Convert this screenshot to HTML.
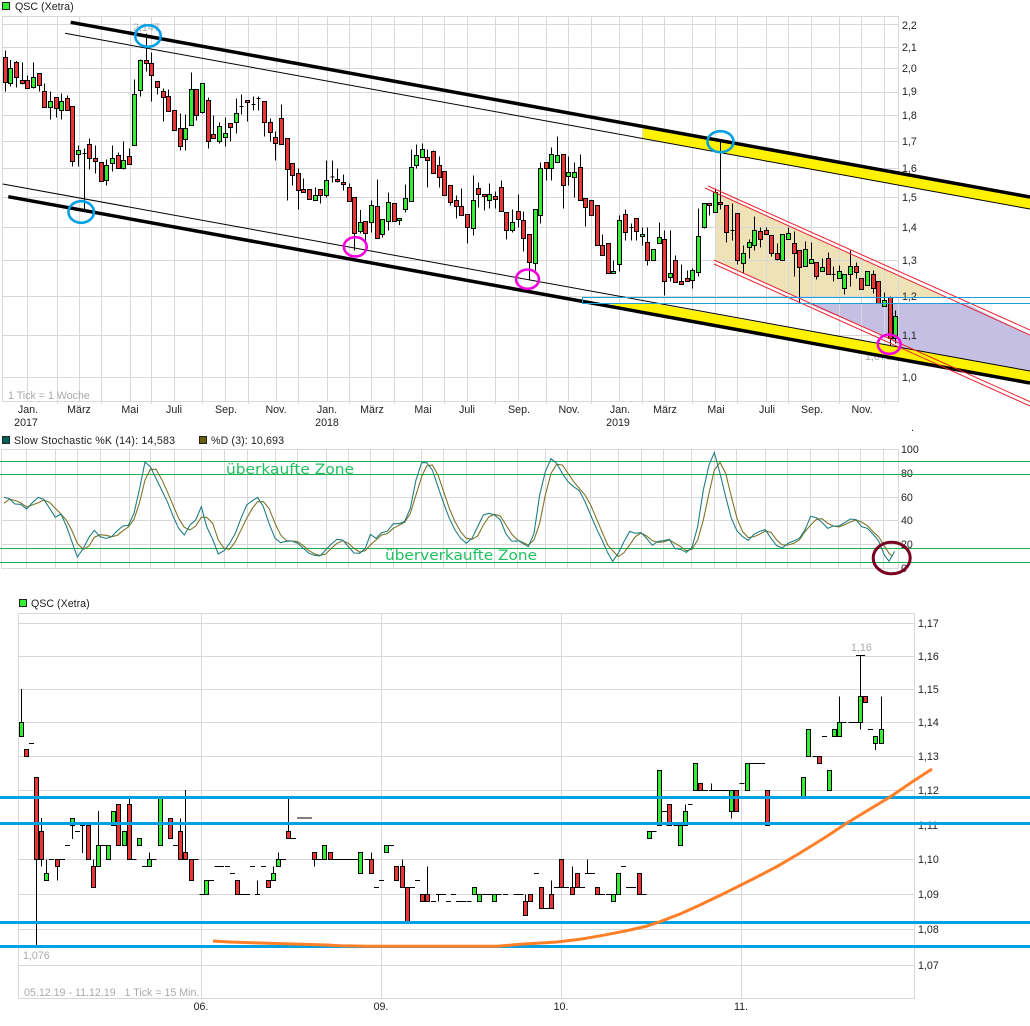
<!DOCTYPE html>
<html lang="de"><head><meta charset="utf-8"><title>QSC (Xetra)</title>
<style>
html,body{margin:0;padding:0;background:#fff;width:1030px;height:1026px;overflow:hidden}
svg{display:block;position:absolute;left:0;top:0}
text{font-family:"Liberation Sans",sans-serif;font-size:10.67px;fill:#222}
.g{fill:#aaa}
.grid{stroke:#d8d8d8;stroke-width:1;fill:none;shape-rendering:crispEdges}
.w{stroke:#000;stroke-width:3;fill:none;shape-rendering:crispEdges}
.r{fill:#ee3333;stroke:#000;stroke-width:3;shape-rendering:crispEdges}
.u{fill:#33ee33;stroke:#000;stroke-width:3;shape-rendering:crispEdges}
.gl{stroke:#1fb14d;stroke-width:1;shape-rendering:crispEdges}
.rl{stroke:#ea2230;stroke-width:1;fill:none}
</style></head><body>
<svg width="1030" height="1026" viewBox="0 0 1030 1026" xmlns="http://www.w3.org/2000/svg">
<!-- legend 1 -->
<rect x="2.5" y="2.5" width="7" height="7" fill="#33ee33" stroke="#222"/>
<text x="15" y="10">QSC (Xetra)</text>
<!-- chart 1 fills -->
<polygon points="715,193 945,297 797,297 715,260" fill="#eee2b6"/>
<polygon points="808,304 967,304 1030,335 1030,371 900,347 887,337" fill="#c6bfe4"/>
<!-- chart 1 grid -->
<path class="grid" d="M2.5 16.5H898.5M2.5 24.5H898.5M2.5 47.5H898.5M2.5 68.5H898.5M2.5 92.5H898.5M2.5 115.5H898.5M2.5 141.5H898.5M2.5 168.5H898.5M2.5 197.5H898.5M2.5 227.5H898.5M2.5 260.5H898.5M2.5 296.5H898.5M2.5 335.5H898.5M2.5 377.5H898.5M2.5 401.5H898.5M2.5 16V402M27.5 16V402M57.5 16V404M79.5 16V402M101.5 16V404M130.5 16V402M151.5 16V404M174.5 16V402M202.5 16V404M225.5 16V402M248.5 16V404M276.5 16V402M298.5 16V404M327.5 16V402M349.5 16V404M371.5 16V402M394.5 16V404M422.5 16V402M444.5 16V404M467.5 16V402M495.5 16V404M518.5 16V402M546.5 16V404M568.5 16V402M591.5 16V404M619.5 16V402M642.5 16V404M664.5 16V402M692.5 16V404M715.5 16V402M737.5 16V404M766.5 16V402M788.5 16V404M811.5 16V402M839.5 16V404M861.5 16V402M884.5 16V404M898.5 16V402"/>
<!-- chart 1 labels -->
<g>
<text x="902" y="29">2,2</text><text x="902" y="51">2,1</text><text x="902" y="72">2,0</text><text x="902" y="95">1,9</text><text x="902" y="119">1,8</text><text x="902" y="145">1,7</text><text x="902" y="172">1,6</text><text x="902" y="201">1,5</text><text x="902" y="231">1,4</text><text x="902" y="264">1,3</text><text x="902" y="300">1,2</text><text x="902" y="339">1,1</text><text x="902" y="381">1,0</text>
<text x="911" y="431">.</text>
</g>
<g text-anchor="middle">
<text x="28" y="413">Jan.</text><text x="26" y="426">2017</text><text x="79" y="413">März</text><text x="130" y="413">Mai</text><text x="174" y="413">Juli</text><text x="226" y="413">Sep.</text><text x="276" y="413">Nov.</text><text x="327" y="413">Jan.</text><text x="327" y="426">2018</text><text x="372" y="413">März</text><text x="423" y="413">Mai</text><text x="467" y="413">Juli</text><text x="519" y="413">Sep.</text><text x="569" y="413">Nov.</text><text x="620" y="413">Jan.</text><text x="618" y="426">2019</text><text x="665" y="413">März</text><text x="716" y="413">Mai</text><text x="767" y="413">Juli</text><text x="812" y="413">Sep.</text><text x="862" y="413">Nov.</text>
</g>
<text class="g" x="8" y="399">1 Tick = 1 Woche</text>
<text class="g" x="133" y="31">2,147</text>
<text class="g" x="865" y="360">1,076</text>
<!-- yellow -->
<polygon points="643,126 1030,197 1030,209 643,138" fill="#fff200"/>
<polygon points="612,304 657,304 1030,371 1030,383 680,320 612,308" fill="#fff200"/>
<!-- chart 1 candles -->
<g transform="scale(.33333)">
<path class="w" d="M16 152V275M31 180V260M49 183V262M67 187V254M82 227V265M100 187V265M118 220V274M133 250V322M151 274V358M169 292V352M184 280V358M202 286V331M217 319V500M235 436V500M253 445V630M268 415V508M286 436V520M304 487V544M319 478V556M337 436V514M355 457V505M370 424V508M388 445V493M403 238V436M421 178V290M439 100V214M454 157V305M472 244V283M490 265V364M505 268V334M523 331V391M541 340V451M556 343V451M574 217V376M589 268V362M607 250V340M625 292V445M640 346V415M658 367V430M676 352V439M691 370V424M709 295V400M724 283V343M742 301V364M760 289V331M775 289V331M793 304V410M811 355V424M826 394V481M844 313V433M862 415V601M877 490V556M895 505V628M910 535V577M928 568V598M946 562V601M961 568V610M979 481V592M997 481V547M1012 505V547M247 461h12M718 319h12M754 313h12M769 295h12M991 531h12"/>
<path class="r" d="M10 172h12v75h-12zM43 187h12v45h-12zM61 241h12v9h-12zM76 241h12v24h-12zM112 220h12v36h-12zM127 274h12v48h-12zM163 292h12v34h-12zM196 295h12v36h-12zM211 319h12v165h-12zM262 433h12v42h-12zM280 475h12v9h-12zM298 487h12v57h-12zM349 466h12v39h-12zM382 469h12v24h-12zM433 181h12v9h-12zM448 190h12v36h-12zM466 244h12v18h-12zM484 274h12v18h-12zM499 289h12v45h-12zM517 331h12v60h-12zM535 385h12v54h-12zM583 268h12v78h-12zM619 301h12v123h-12zM634 403h12v12h-12zM685 370h12v12h-12zM736 301h12v6h-12zM787 304h12v63h-12zM805 367h12v30h-12zM820 412h12v18h-12zM838 355h12v78h-12zM856 415h12v93h-12zM871 490h12v36h-12zM889 520h12v51h-12zM904 568h12v9h-12zM922 568h12v30h-12zM955 568h12v18h-12zM1006 538h12v6h-12z"/>
<path class="u" d="M25 205h12v45h-12zM94 232h12v30h-12zM145 304h12v18h-12zM178 304h12v27h-12zM229 451h12v12h-12zM313 496h12v45h-12zM331 475h12v15h-12zM364 481h12v24h-12zM397 283h12v153h-12zM415 181h12v90h-12zM550 385h12v33h-12zM568 268h12v108h-12zM601 250h12v87h-12zM652 379h12v45h-12zM670 400h12v12h-12zM703 340h12v27h-12zM940 586h12v15h-12zM973 541h12v45h-12z"/>
</g>
<g transform="translate(340,120) scale(.33333)">
<path class="w" d="M10 163V212M28 190V244M43 232V391M61 270V340M76 304V370M94 241V337M112 178V355M127 298V352M145 217V331M163 250V304M178 295V315M196 193V277M214 88V244M229 73V145M247 70V112M262 88V202M280 91V160M298 109V202M313 154V226M331 196V256M349 226V295M364 205V286M382 283V370M400 166V346M415 187V262M433 223V271M448 190V265M466 214V265M484 181V274M499 277V358M517 268V337M535 223V322M550 274V394M568 343V481M586 268V451M601 127V310M619 127V181M634 82V181M652 49V127M670 103V265M685 109V196M703 127V232M721 103V241M736 235V319M754 241V286M772 256V376M787 343V406M805 370V460M820 421V460M838 286V454M856 268V361M874 310V361M889 295V361M907 322V376M922 322V436M940 388V421M958 307V370M973 331V526M991 331V484M1006 406V487M868 322h12"/>
<path class="r" d="M4 187h12v6h-12zM22 202h12v42h-12zM37 232h12v108h-12zM70 304h12v36h-12zM106 259h12v96h-12zM157 250h12v54h-12zM256 112h12v9h-12zM274 94h12v66h-12zM292 136h12v36h-12zM307 154h12v72h-12zM325 196h12v51h-12zM343 241h12v18h-12zM358 259h12v27h-12zM376 283h12v39h-12zM409 205h12v18h-12zM427 223h12v6h-12zM460 229h12v9h-12zM478 202h12v72h-12zM493 277h12v54h-12zM529 274h12v24h-12zM544 301h12v54h-12zM562 343h12v84h-12zM613 127h12v18h-12zM664 103h12v93h-12zM715 142h12v99h-12zM730 235h12v27h-12zM748 241h12v45h-12zM766 256h12v120h-12zM781 376h12v30h-12zM799 370h12v90h-12zM850 283h12v54h-12zM883 295h12v39h-12zM916 367h12v54h-12zM967 358h12v126h-12zM1000 421h12v66h-12z"/>
<path class="u" d="M55 307h12v27h-12zM88 256h12v51h-12zM121 298h12v45h-12zM139 247h12v57h-12zM172 295h12v6h-12zM190 235h12v33h-12zM208 142h12v102h-12zM223 106h12v30h-12zM241 88h12v24h-12zM394 241h12v84h-12zM442 223h12v18h-12zM511 307h12v24h-12zM580 268h12v162h-12zM595 145h12v141h-12zM628 103h12v42h-12zM646 106h12v21h-12zM679 157h12v12h-12zM697 157h12v15h-12zM814 454h12v6h-12zM832 301h12v132h-12zM901 343h12v6h-12zM934 388h12v33h-12zM952 352h12v18h-12zM985 460h12v12h-12z"/>
</g>
<g transform="translate(680,120) scale(.33333)">
<path class="w" d="M4 433V493M22 451V484M37 445V505M55 265V469M73 250V325M88 250V286M106 205V277M121 60V268M139 256V367M157 250V361M172 280V433M190 376V460M208 358V415M223 289V391M241 322V382M259 322V343M274 346V409M292 370V421M307 343V421M325 322V358M343 334V469M358 391V550M376 364V439M394 367V430M409 427V478M427 415V454M445 397V463M460 440V484M478 436V475M493 463V523M511 391V499M529 427V475M544 475V508M562 454V496M580 451V520M595 484V550M613 517V559M631 530V680M646 571V670M151 331h12M454 463h12"/>
<path class="r" d="M-2 484h12v9h-12zM16 475h12v9h-12zM82 250h12v6h-12zM115 247h12v6h-12zM133 256h12v81h-12zM166 280h12v141h-12zM235 334h12v24h-12zM253 331h12v12h-12zM268 346h12v54h-12zM286 400h12v18h-12zM337 370h12v30h-12zM352 391h12v51h-12zM403 427h12v42h-12zM439 415h12v48h-12zM523 439h12v18h-12zM538 475h12v33h-12zM574 463h12v42h-12zM589 484h12v66h-12zM625 533h12v122h-12z"/>
<path class="u" d="M31 451h12v30h-12zM49 349h12v108h-12zM67 250h12v72h-12zM100 217h12v60h-12zM184 400h12v30h-12zM202 367h12v15h-12zM217 331h12v45h-12zM301 343h12v78h-12zM319 340h12v18h-12zM370 388h12v51h-12zM388 418h12v12h-12zM421 442h12v12h-12zM472 454h12v21h-12zM487 463h12v42h-12zM505 439h12v24h-12zM556 454h12v42h-12zM607 541h12v18h-12zM640 589h12v66h-12z"/>
</g>
<!-- trend lines -->
<g fill="none" stroke="#000">
<path stroke-width="3.5" d="M70.7 22.3L1030 197"/>
<path stroke-width="3.5" d="M8.3 196.7L1030 383"/>
<path stroke-width="1" d="M65 33.3L1030 209"/>
<path stroke-width="1" d="M2.7 184L1030 371"/>
</g>
<path class="rl" d="M708 186L1030 330M705 188L1030 335M714 260L1030 401.7M714 264L1030 406"/>
<rect x="582.5" y="297.5" width="460" height="6" fill="none" stroke="#1c9fd8" stroke-width="1"/>
<g fill="none" stroke="#00a0e3" stroke-width="2.6">
<ellipse cx="148" cy="36" rx="12.7" ry="10.8"/>
<ellipse cx="81.2" cy="212" rx="12.7" ry="10.8"/>
<ellipse cx="720.5" cy="141.7" rx="13" ry="10.5"/>
</g>
<g fill="none" stroke="#f400e0" stroke-width="2.6">
<ellipse cx="355.3" cy="246.8" rx="11.4" ry="9.6"/>
<ellipse cx="527.5" cy="279.2" rx="11.4" ry="9.6"/>
<ellipse cx="889.2" cy="344.2" rx="11.4" ry="9.6"/>
</g>
<!-- stochastic -->
<rect x="2.5" y="436.5" width="7" height="7" fill="#006060" stroke="#222"/>
<text x="14" y="444" textLength="161">Slow Stochastic %K (14): 14,583</text>
<rect x="199.5" y="436.5" width="7" height="7" fill="#666000" stroke="#222"/>
<text x="211" y="444" textLength="73">%D (3): 10,693</text>
<path class="grid" d="M1.5 449.5H898.5M1.5 474.5H898.5M1.5 497.5H898.5M1.5 520.5H898.5M1.5 544.5H898.5M1.5 568.5H898.5M1.5 449V569M26.5 449V569M55.5 449V569M77.5 449V569M100.5 449V569M129.5 449V569M150.5 449V569M174.5 449V569M201.5 449V569M224.5 449V569M247.5 449V569M275.5 449V569M297.5 449V569M326.5 449V569M348.5 449V569M370.5 449V569M393.5 449V569M421.5 449V569M443.5 449V569M466.5 449V569M494.5 449V569M517.5 449V569M545.5 449V569M567.5 449V569M590.5 449V569M618.5 449V569M641.5 449V569M663.5 449V569M691.5 449V569M714.5 449V569M736.5 449V569M765.5 449V569M787.5 449V569M810.5 449V569M838.5 449V569M860.5 449V569M883.5 449V569M898.5 449V569"/>
<text x="901" y="453">100</text><text x="901" y="477">80</text><text x="901" y="501">60</text><text x="901" y="524">40</text><text x="901" y="548">20</text><text x="901" y="572">0</text>
<path class="gl" d="M0 461.5H1030M0 474.5H1030M0 548.5H1030M0 562.5H1030"/>
<text x="226" y="474" textLength="128" lengthAdjust="spacingAndGlyphs" style="font-family:'DejaVu Sans',sans-serif;font-size:14.5px;fill:#1fc060">überkaufte Zone</text>
<text x="385" y="560" textLength="152" lengthAdjust="spacingAndGlyphs" style="font-family:'DejaVu Sans',sans-serif;font-size:14.5px;fill:#1fc060">überverkaufte Zone</text>
<g transform="translate(0,380) scale(.33333)" fill="none" stroke-width="3.2">
<polyline stroke="#7c7222" points="12,370 28,358 45,361 62,368 80,381 97,375 115,368 131,360 149,367 166,385 183,402 200,422 215,450 232,490 250,508 267,498 283,472 300,464 318,466 335,470 352,466 369,452 385,441 402,418 418,370 435,300 451,268 468,268 485,298 502,335 519,375 536,415 553,442 570,450 587,438 604,412 620,412 638,430 655,480 672,505 689,508 706,485 723,450 740,415 757,385 773,365 790,365 807,385 825,430 842,465 859,482 876,483 893,485 910,497 927,512 944,522 960,526 977,522 994,505 1011,490 1028,482 1045,490 1062,505 1079,516 1096,512 1111,495 1128,480 1145,465 1162,461 1180,445 1197,436 1214,427 1231,400 1248,345 1265,290 1280,258 1297,255 1314,285 1331,335 1348,385 1365,425 1382,455 1399,475 1416,478 1433,468 1450,435 1467,410 1484,403 1501,408 1518,435 1535,462 1552,480"/>
<polyline stroke="#1b7c7f" points="12,352 28,356 45,372 62,373 80,387 97,368 115,352 131,358 149,385 166,412 183,402 200,440 232,531 250,505 267,472 283,451 300,470 318,475 335,470 352,452 369,438 385,436 402,400 418,330 435,246 451,260 468,295 485,330 502,365 519,408 536,445 553,465 570,435 587,420 604,380 620,440 638,478 655,522 672,512 689,490 706,460 723,415 740,375 757,362 773,352 790,380 807,430 825,475 842,488 859,484 876,483 893,490 910,505 927,520 944,526 960,528 977,510 994,492 1011,478 1028,480 1045,500 1062,519 1079,520 1096,505 1111,463 1128,475 1145,458 1162,454 1180,431 1197,431 1214,424 1231,385 1248,300 1265,248 1280,248 1297,270 1314,320 1331,370 1348,415 1365,450 1382,475 1399,490 1416,475 1433,440 1450,405 1467,400 1484,405 1501,420 1518,462 1535,483 1552,484"/>
</g>
<g transform="translate(520,430) scale(.33333)" fill="none" stroke-width="3.2">
<polyline stroke="#7c7222" points="-8,330 8,337 25,345 42,330 59,280 76,195 93,130 110,103 127,105 144,130 161,155 178,175 195,195 212,225 229,265 246,305 263,345 278,362 295,380 312,368 329,345 346,320 363,309 380,318 397,332 414,337 431,336 448,330 465,340 482,350 499,362 516,358 533,330 550,270 567,190 583,120 600,97 617,130 634,200 651,265 668,305 685,323 702,320 719,313 736,303 753,307 770,330 787,345 804,345 821,340 838,330 855,305 872,285 889,268 906,266 923,280 940,288 957,291 974,284 991,276 1008,270 1025,276 1042,287 1059,305 1076,320 1093,348 1107,370 1117,378"/>
<polyline stroke="#1b7c7f" points="-8,330 8,340 25,350 42,310 59,195 76,125 93,86 110,100 127,130 144,155 161,170 178,182 195,215 212,255 229,295 246,330 263,368 278,394 295,370 312,335 329,304 346,310 363,308 380,325 397,346 414,334 431,332 448,328 465,356 482,358 499,367 516,352 533,290 550,180 567,105 583,68 600,130 617,200 634,265 651,303 668,320 685,331 702,313 719,304 736,299 753,325 770,347 787,354 804,340 821,333 838,325 855,300 872,259 889,263 906,277 923,295 940,288 957,288 974,278 991,267 1008,269 1025,290 1042,295 1059,312 1076,333 1093,375 1107,394 1124,364"/>
</g>
<ellipse cx="891.7" cy="558" rx="18.5" ry="15.8" fill="none" stroke="#7a0020" stroke-width="3"/>
<!-- chart 2 -->
<rect x="19.5" y="599.5" width="7" height="7" fill="#33ee33" stroke="#222"/>
<text x="31" y="607">QSC (Xetra)</text>
<path class="grid" d="M18.5 613.5H914.5M18.5 623.5H914.5M18.5 656.5H914.5M18.5 689.5H914.5M18.5 722.5H914.5M18.5 756.5H914.5M18.5 790.5H914.5M18.5 823.5H914.5M18.5 859.5H914.5M18.5 894.5H914.5M18.5 929.5H914.5M18.5 965.5H914.5M18.5 998.5H914.5M18.5 613V999M201.5 613V999M381.5 613V999M561.5 613V999M741.5 613V999M914.5 613V999"/>
<text x="918" y="627">1,17</text><text x="918" y="660">1,16</text><text x="918" y="693">1,15</text><text x="918" y="726">1,14</text><text x="918" y="760">1,13</text><text x="918" y="794">1,12</text><text x="918" y="829">1,11</text><text x="918" y="863">1,10</text><text x="918" y="898">1,09</text><text x="918" y="933">1,08</text><text x="918" y="969">1,07</text>
<g text-anchor="middle"><text x="201" y="1010">06.</text><text x="381" y="1010">09.</text><text x="561" y="1010">10.</text><text x="741" y="1010">11.</text></g>
<text class="g" x="851" y="651">1,16</text>
<text class="g" x="23" y="959">1,076</text>
<text class="g" x="24" y="996" xml:space="preserve">05.12.19 - 11.12.19   1 Tick = 15 Min.</text>
<g transform="translate(0,680) scale(.33333)">
<path class="w" d="M64 27V127M87 190h15M109 292V795M124 414V560M139 538V580M147 538h15M172 559V601M179 538h16M195 496h15M217 436V477M225 454h15M247 436V519M240 436h15M280 538V559M295 393V496M295 496h25M388 355V373M382 538h28M426 559h15M448 517V538M441 538h29M519 496h15M541 415V454M556 330V517M568 538h28M598 643h15M625 601h17M643 559h29M675 559h15M690 580h15M712 643h38M750 559h15M772 601V643M765 643h15M783 559h15M820 559V580M835 517V538M835 538h23M865 355V454M865 475h23M891 414h45M943 538V560M943 538h24M991 538h29"/>
<path class="r" d="M73 208h12v21h-12zM103 292h12v246h-12zM118 454h12v84h-12zM166 538h12v21h-12zM259 436h12v102h-12zM274 559h12v63h-12zM349 373h12v123h-12zM382 373h12v165h-12zM505 415h12v60h-12zM535 454h12v84h-12zM550 517h12v21h-12zM568 538h12v63h-12zM706 601h12v42h-12zM799 601h12v21h-12zM859 454h12v21h-12zM937 517h12v21h-12zM985 517h12v21h-12z"/>
<path class="u" d="M58 127h12v42h-12zM133 580h12v21h-12zM211 415h12v21h-12zM289 496h12v63h-12zM319 496h12v42h-12zM334 394h12v42h-12zM367 454h12v42h-12zM412 475h12v21h-12zM442 538h12v21h-12zM475 352h12v144h-12zM613 601h12v42h-12zM814 580h12v21h-12zM829 538h12v21h-12zM967 496h12v42h-12z"/>
</g>
<g transform="translate(340,750) scale(.33333)">
<path class="w" d="M0 328h55M73 328h15M94 307V328M102 412h15M117 391h15M139 286h23M187 328V349M202 412h23M225 391h15M262 349V433M273 454h15M295 433V454M288 433h30M318 454h15M333 433h15M348 454h30M380 454h15M403 433h82M489 433h15M520 433h30M556 433V454M582 370h15M604 475h36M634 391V433M642 412h45M697 349V412M712 412h23M742 328V370M735 370h30M772 433h23M798 433h15M843 349h15M858 412h30M898 433h22"/>
<path class="r" d="M88 328h12v42h-12zM163 349h12v42h-12zM181 349h12v63h-12zM196 412h12v105h-12zM241 433h12v21h-12zM256 433h12v21h-12zM550 454h12v42h-12zM565 433h12v21h-12zM598 412h12v63h-12zM628 433h12v42h-12zM658 328h12v84h-12zM691 412h12v21h-12zM706 370h12v42h-12zM766 412h12v21h-12zM892 370h12v63h-12z"/>
<path class="u" d="M55 307h12v63h-12zM133 286h12v21h-12zM397 412h12v21h-12zM412 433h12v21h-12zM457 433h12v21h-12zM814 433h12v21h-12zM829 370h12v63h-12z"/>
</g>
<g transform="translate(640,620) scale(.33333)">
<path class="w" d="M28 634h22M66 574h16M80 616h15M100 616h15M136 553V574M144 553h14M181 511h23M214 490V511M207 511h60M274 574V596M298 490h15M322 430h53M517 409h15M546 349h15M598 229V307M598 307h22M625 307h30M661 106V229M661 307V328M648 106h27M684 328h15M706 370V390M724 229V328"/>
<path class="r" d="M82 553h12v63h-12zM175 490h12v21h-12zM283 511h12v63h-12zM376 511h12v105h-12zM532 409h12v21h-12zM670 229h12v19h-12z"/>
<path class="u" d="M22 634h12v21h-12zM52 451h12v165h-12zM115 616h12v60h-12zM130 574h12v42h-12zM160 430h12v81h-12zM268 511h12v63h-12zM316 430h12v81h-12zM484 472h12v58h-12zM499 328h12v81h-12zM562 451h12v60h-12zM577 328h12v21h-12zM592 307h12v42h-12zM655 229h12v78h-12zM700 349h12v21h-12zM718 328h12v42h-12z"/>
</g>
<path d="M0 797.5H1030M0 823.5H1030M0 922.5H1030M0 946.5H1030" stroke="#00a0e3" stroke-width="3" fill="none" shape-rendering="crispEdges"/>
<polyline fill="none" stroke="#ff7f27" stroke-width="3" points="213,941 230,942 260,943 293,944 327,945 340,945.7 368,946.3 497,946.3 520,944.3 537,943.3 557,942 580,939.3 603,935.3 627,930.7 647,926 660,921.7 680,914 700,905 725,893 753,879 777,866.5 800,853 825,837.5 847,823 870,809 890,797 912,782 932,769"/>
</svg>
</body></html>
